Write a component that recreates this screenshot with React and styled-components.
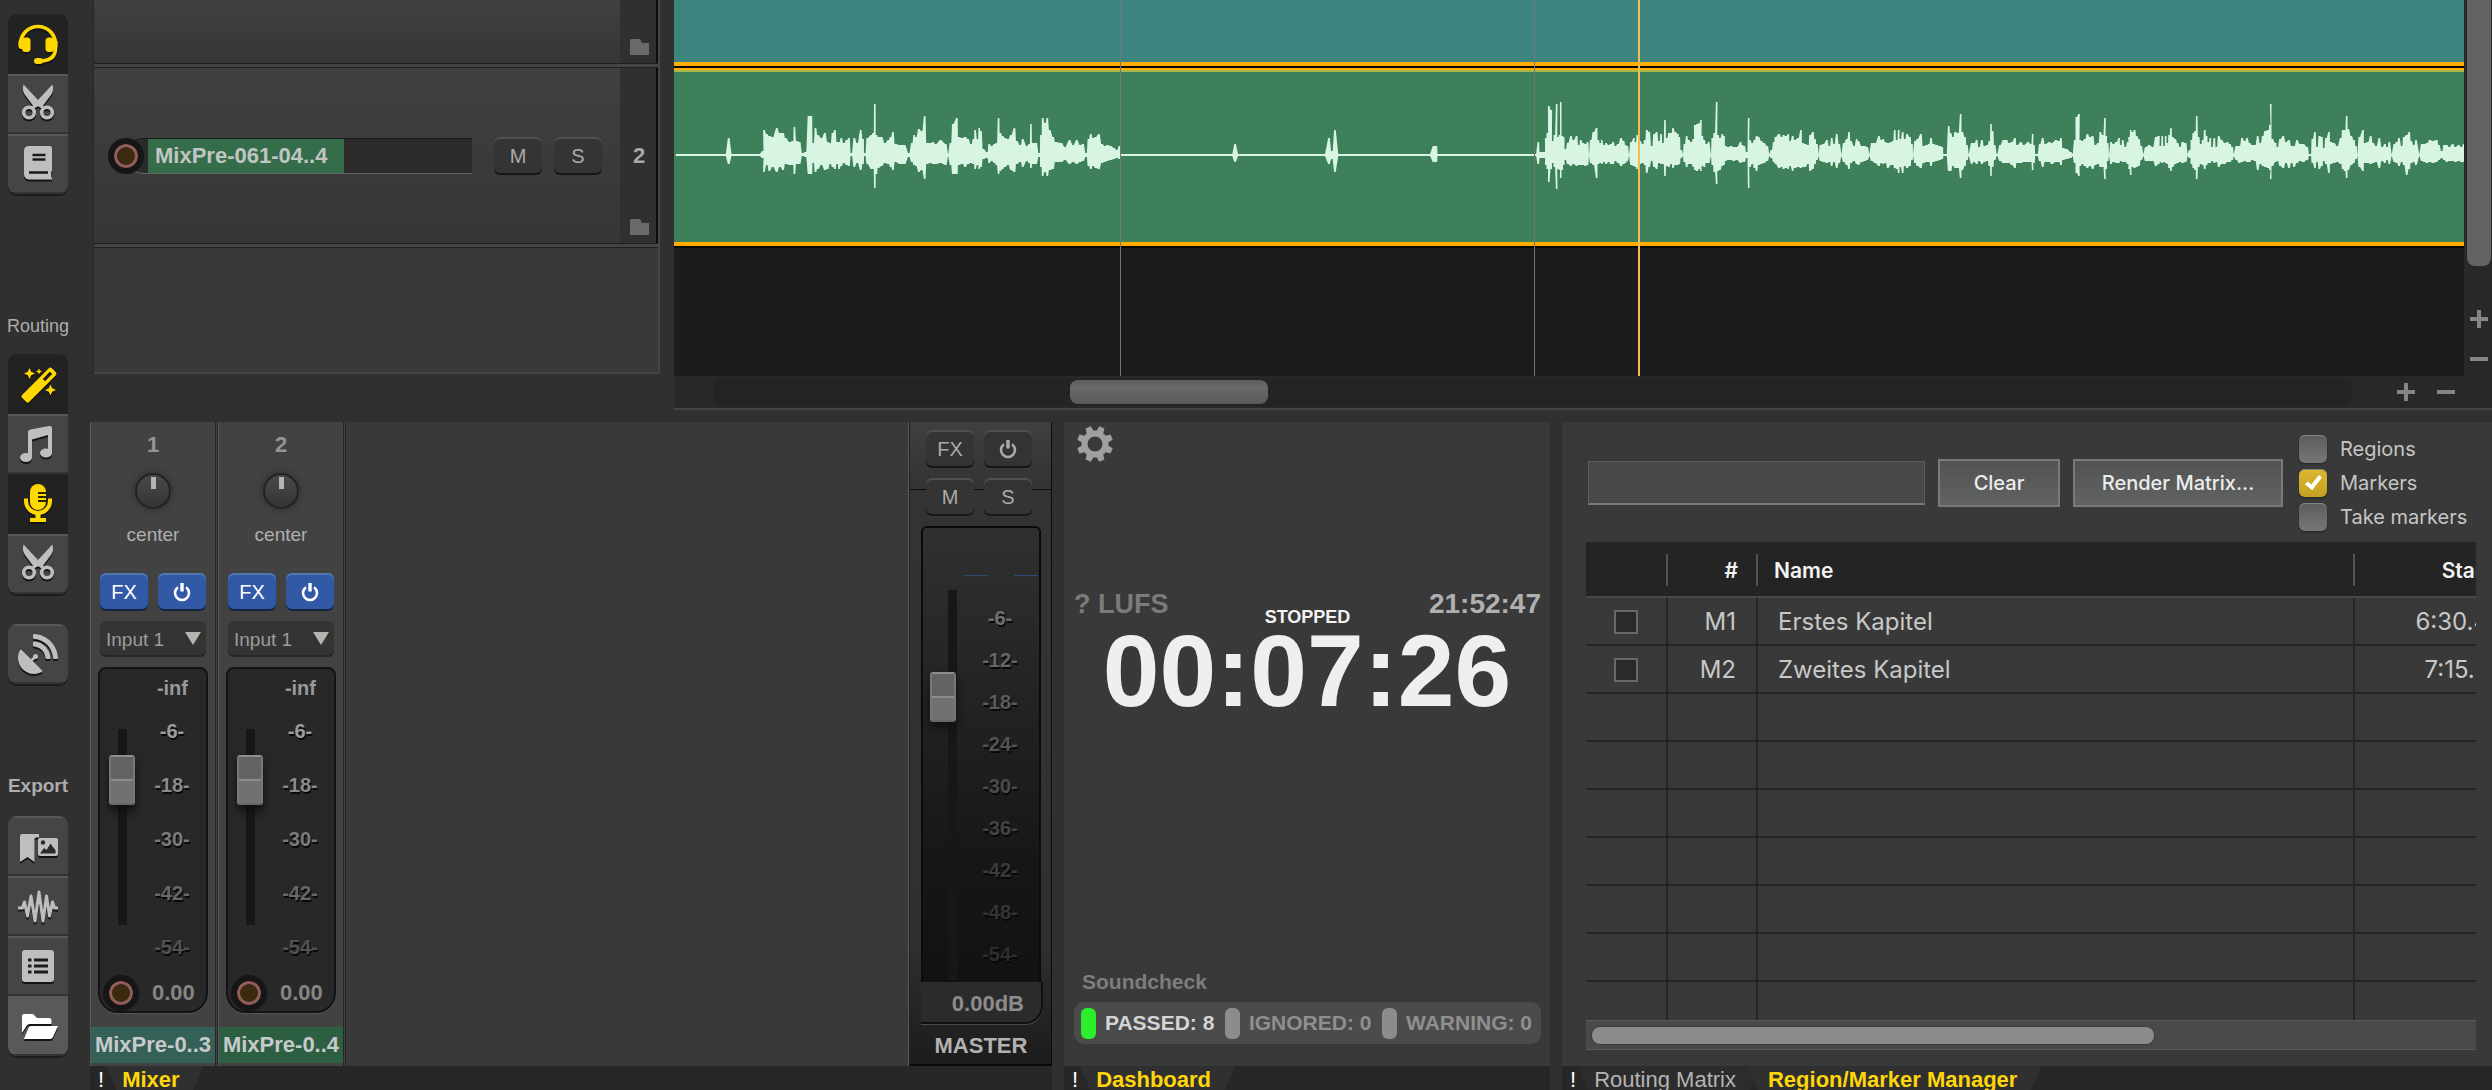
import React from "react";
import styled, { createGlobalStyle, css } from "styled-components";
import { FaSatelliteDish } from "react-icons/fa";

const sans = '"Liberation Sans", Arial, sans-serif';
const ui = 'Inter, "Liberation Sans", sans-serif';

const GlobalStyle = createGlobalStyle`
  *, *::before, *::after { box-sizing: border-box; }
  html, body { margin: 0; background: #303030; }
  body { font-family: ${sans}; color: #a9a9a9; overflow: hidden; }
  button, input, select { font: inherit; color: inherit; margin: 0; }
`;

/* ---------- frame ---------- */

const Frame = styled.div`
  display: grid;
  grid-template-columns: 90px minmax(0, 1fr);
  grid-template-rows: minmax(0, 1fr);
  height: 100vh;
  overflow: hidden;
  background: #303030;
`;

const Main = styled.main`
  display: flex;
  flex-direction: column;
  min-width: 0;
  min-height: 0;
`;

const Upper = styled.section`
  display: flex;
  flex: none;
  height: 410px;
`;

const Lower = styled.section`
  display: grid;
  grid-template-columns: 962px 486px minmax(0, 1fr);
  grid-template-rows: minmax(0, 1fr);
  gap: 12px;
  flex: 1;
  min-height: 0;
  padding-top: 12px;
`;

/* ---------- sidebar ---------- */

const Sidebar = styled.nav`
  display: flex;
  flex-direction: column;
  align-items: flex-start;
  padding: 14px 8px 0;
`;

const SideLabel = styled.h2`
  width: 60px;
  margin: ${(p) => (p.$bold ? "92px 0 20px" : "122px 0 18px")};
  display: flex;
  justify-content: center;
  font-size: ${(p) => (p.$bold ? "19px" : "18px")};
  font-weight: ${(p) => (p.$bold ? 700 : 400)};
  line-height: 20px;
  color: #adadad;
`;

const SideGroup = styled.div`
  width: 60px;
  border-radius: 9px;
  overflow: hidden;
  box-shadow: 0 2px 0 #1c1c1c;
  margin-top: ${(p) => (p.$apart ? "30px" : "0")};
`;

const SideButton = styled.button`
  display: block;
  width: 60px;
  height: 60px;
  padding: 0;
  border: 0;
  border-top: 2px solid ${(p) => (p.$on ? "#242424" : "#585858")};
  background: ${(p) => (p.$on ? "#222222" : p.$lit ? "#595959" : "#454545")};
  color: ${(p) => (p.$on ? "#ffd800" : p.$lit ? "#ffffff" : "#bdbfbf")};
  box-shadow: inset 0 -2px 0 ${(p) => (p.$on ? "#222222" : "#333333")};

  svg {
    display: block;
    width: 60px;
    height: 60px;
    margin-top: -2px;
    filter: drop-shadow(0 2px 0 #141414);
  }
  svg.dish {
    padding: 10px;
  }
`;

const Icon = ({ children }) => (
  <svg viewBox="0 0 60 60" fill="none" aria-hidden="true">{children}</svg>
);

const HeadsetIcon = () => (
  <Icon>
    <path d="M12.500 31.500v-1.500a17.500 17.500 0 0 1 35 0v4c0 8-5 12.500-14 13" stroke="currentColor" strokeWidth="3.600" />
    <path d="M10.500 27h6v8h-3a3 3 0 0 1-3-3zM49.500 27h-6v8h3a3 3 0 0 0 3-3z" fill="currentColor" />
    <rect x="14" y="23.500" width="8.500" height="14.500" rx="3.500" fill="currentColor" />
    <rect x="37.500" y="23.500" width="8.500" height="14.500" rx="3.500" fill="currentColor" />
    <rect x="26" y="44" width="9" height="6" rx="3" fill="currentColor" />
  </Icon>
);

const ScissorsIcon = () => (
  <Icon>
    <path d="M15.600 10.500c-1.400 4-.6 7.500 1.400 10.500l9.400 12.500 4-1.500 3.200 2.500 2.400-2z" fill="currentColor" />
    <path d="M44.400 10.500c1.400 4 .6 7.500-1.400 10.500l-9.400 12.500-4-1.500-3.200 2.500-2.400-2z" fill="currentColor" />
    <circle cx="21" cy="38.500" r="5.300" stroke="currentColor" strokeWidth="3.600" />
    <circle cx="39" cy="38.500" r="5.300" stroke="currentColor" strokeWidth="3.600" />
  </Icon>
);

const BookIcon = () => (
  <Icon>
    <path d="M20.500 12H42a2 2 0 0 1 2 2v22.500l-1 2V43l1 1v1.500H21a5 5 0 0 1-5-5V16.500a4.500 4.500 0 0 1 4.500-4.500z" fill="currentColor" />
    <path d="M24.500 21h13M24.500 25.500h13M21 38.500h19" stroke="#1b1b1b" strokeWidth="2.400" />
  </Icon>
);

const star = (x, y, r) =>
  `M${x} ${y - r}L${x + r * 0.3} ${y - r * 0.3}L${x + r} ${y}L${x + r * 0.3} ${y + r * 0.3}L${x} ${y + r}L${x - r * 0.3} ${y + r * 0.3}L${x - r} ${y}L${x - r * 0.3} ${y - r * 0.3}z`;

const WandIcon = () => (
  <Icon>
    <g transform="rotate(-45 31 31)">
      <path fillRule="evenodd" fill="currentColor" d="M12 26h37.500a2.500 2.500 0 0 1 2.500 2.500v5a2.500 2.500 0 0 1-2.500 2.500H12a2 2 0 0 1-2-2v-6a2 2 0 0 1 2-2zM38 29.400v3.200h10v-3.200z" />
    </g>
    <path d={star(21.5, 19.5, 5.5)} fill="currentColor" />
    <path d={star(31, 17.5, 3)} fill="currentColor" />
    <path d={star(42.5, 36, 5.5)} fill="currentColor" />
  </Icon>
);

const MusicIcon = () => (
  <Icon>
    <path d="M20 18.500c0-1.500 1-2.600 2.500-3L41 12c2-.4 3 .6 3 2v25h-4V21l-16 4.500V43.500h-4z" fill="currentColor" />
    <ellipse cx="18" cy="43.500" rx="6" ry="4.500" fill="currentColor" />
    <ellipse cx="38" cy="39" rx="6" ry="4.500" fill="currentColor" />
  </Icon>
);

const MicIcon = () => (
  <Icon>
    <rect x="22" y="10" width="16" height="26" rx="8" fill="currentColor" />
    <path d="M30 19h8M30 23h8M30 27h8" stroke="#2a2400" strokeWidth="1.800" />
    <path d="M18 24.500v2.500a12 12 0 0 0 24 0v-2.500" stroke="currentColor" strokeWidth="4" />
    <path d="M27.500 39h5v5h5.500v4H22v-4h5.500z" fill="currentColor" />
  </Icon>
);

const BookmarkImageIcon = () => (
  <Icon>
    <path d="M14 18h17v3.500h-3a2 2 0 0 0-1.500 2V46L19.500 41 12 46V20a2 2 0 0 1 2-2z" fill="currentColor" />
    <rect x="30" y="22" width="20" height="18" rx="2" fill="currentColor" />
    <circle cx="35" cy="26.500" r="2.200" fill="#2b2b2b" />
    <path d="M32 37.500l4-5.500 2.500 2 4-6.500 2 3 3 3.500v3.500z" fill="#2b2b2b" />
  </Icon>
);

const WaveIcon = () => (
  <Icon>
    <path d="M10 32h4.500l2-6 3 14 3.500-20 4 25 4-29 4 29 3.500-25 3 20 3-14 2 6H50" stroke="currentColor" strokeWidth="3" strokeLinejoin="round" />
  </Icon>
);

const ListIcon = () => (
  <Icon>
    <rect x="14" y="14" width="32" height="32" rx="3" fill="currentColor" />
    <path d="M20 24h3.500M26 24h14M20 30h3.500M26 30h14M20 36h3.500M26 36h14" stroke="#1b1b1b" strokeWidth="3.200" />
  </Icon>
);

const FolderIcon = () => (
  <Icon>
    <path d="M14 37V20a2 2 0 0 1 2-2h9l4 4h12a2.500 2.500 0 0 1 2.500 2.500V28H22a4 4 0 0 0-3.500 2z" fill="currentColor" />
    <path d="M23 30h27l-5 11a3 3 0 0 1-3 2H16l4.500-11a3 3 0 0 1 2.500-2z" fill="currentColor" />
  </Icon>
);

/* ---------- shared controls ---------- */

const PadButton = styled.button`
  display: flex;
  align-items: center;
  justify-content: center;
  flex: none;
  width: 48px;
  height: 38px;
  padding: 0;
  border: 0;
  border-radius: 6px;
  font-size: 20px;
  line-height: 24px;
  ${(p) =>
    p.$active
      ? css`
          background: #3159a6;
          color: #ffffff;
          box-shadow: inset 0 2px 0 #5078ac, inset 0 -2px 0 #16243f;
        `
      : css`
          background: #343434;
          color: #aaaaaa;
          box-shadow: inset 0 2px 0 #505050, inset 0 -2px 0 #171717;
        `}
`;

const PowerIcon = () => (
  <svg width="18" height="20" viewBox="0 0 18 20" fill="none" aria-hidden="true">
    <path d="M5 5.300a7 7 0 1 0 8 0" stroke="currentColor" strokeWidth="2.600" />
    <path d="M9 1v8.500" stroke="currentColor" strokeWidth="3.400" />
  </svg>
);

const RecordButton = styled.button`
  position: relative;
  flex: none;
  width: 36px;
  height: 36px;
  padding: 0;
  border: 6px solid #161616;
  border-radius: 50%;
  background: #3a2a10;
  box-shadow: inset 0 0 0 3px #905d5b;
`;

const Slider = styled.input`
  appearance: none;
  writing-mode: vertical-lr;
  direction: rtl;
  flex: none;
  width: 27px;
  height: ${(p) => p.$length};
  padding: 0;
  background: linear-gradient(#171717, #171717) ${(p) => (p.$edge ? "right" : "center")} / 9px 100% no-repeat;

  &::-webkit-slider-runnable-track {
    width: 27px;
    height: 100%;
  }
  &::-webkit-slider-thumb {
    appearance: none;
    width: 26px;
    height: 50px;
    border: 2px solid #787878;
    border-top-color: #8e8e8e;
    border-bottom-color: #686868;
    border-radius: 3px;
    background: linear-gradient(#636363 0 22px, #8c8c8c 22px 24px, #717171 24px);
    box-shadow: 0 6px 8px #111111;
  }
`;

const ScaleMark = styled.span`
  display: block;
  font-size: 20px;
  font-weight: 700;
  line-height: ${(p) => p.$pitch};
  color: ${(p) => p.$tone};
  text-shadow: 1px 2px 0 #080808;
`;

/* ---------- track panel ---------- */

const TrackPanel = styled.div`
  display: flex;
  flex-direction: column;
  flex: none;
  width: 566px;
  height: 374px;
  margin: 0 14px 0 4px;
  border-right: 2px solid #454545;
  border-bottom: 2px solid #454545;
  background: #393939;
  box-shadow: -1px 0 0 #262626;
`;

const TrackRow = styled.div`
  display: flex;
  height: ${(p) => p.$height};
  border-bottom: 1px solid #202020;
  background: linear-gradient(#404040, #363636);
`;

const TrackGap = styled.div`
  height: 4px;
  border-bottom: 1px solid #202020;
  background: #444444;
`;

const TrackMain = styled.div`
  display: flex;
  flex: 1;
  align-items: center;
  min-width: 0;
  padding: 0 18px 0 14px;
`;

const TrackIndex = styled.div`
  display: grid;
  grid-template-rows: 1fr 24px 1fr;
  justify-items: center;
  width: 38px;
  padding: 0 0 8px 2px;
  border-right: 2px solid #0c0c0c;
  background: #303030;
  font-size: 22px;
  font-weight: 700;
  line-height: 24px;

  svg {
    grid-row: 3;
    align-self: end;
  }
  b {
    grid-row: 2;
    margin-top: 4px;
  }
`;

const TrackField = styled.div`
  display: flex;
  flex: 1;
  height: 36px;
  margin: 0 22px 0 -18px;
  padding-left: 22px;
  border-top: 1px solid #1a1a1a;
  border-bottom: 1px solid #636363;
  border-radius: 18px 0 0 18px;
  background: #2b2b2b;
`;

const TrackName = styled.span`
  padding: 0 8px 0 7px;
  width: 196px;
  background: #356d4b;
  color: #c0c6c2;
  font-size: 22px;
  font-weight: 700;
  line-height: 34px;
  white-space: nowrap;
`;

const RowButtons = styled.div`
  display: flex;
  gap: ${(p) => p.$gap || "10px"};
`;

const SmallFolder = () => (
  <svg width="19" height="16" viewBox="0 0 19 16" aria-hidden="true">
    <path d="M1 0h9l2 4h7v12H0V1z" fill="#696969" />
  </svg>
);

/* ---------- arrange view ---------- */

const Arrange = styled.div`
  display: grid;
  grid-template-columns: minmax(0, 1fr) 28px;
  grid-template-rows: minmax(0, 1fr) 32px;
  flex: 1;
  min-width: 0;
  border-bottom: 2px solid #444444;
  background: #282828;
`;

const Lanes = styled.div`
  position: relative;
  background: #1c1c1c;
  overflow: hidden;
`;

const Clip = styled.div`
  height: ${(p) => p.$height};
  background: ${(p) => p.$color};
  border-bottom: 4px solid #ffab00;
  border-top: ${(p) => (p.$first ? "0" : "2px solid #ffab00")};
  box-shadow: 0 2px 0 #080808${(p) => (p.$first ? "" : ", inset 0 2px 0 #a7b846")};
  margin-bottom: 2px;

  svg {
    display: block;
    width: 100%;
    height: 172px;
  }
`;

const TimeLine = styled.i`
  position: absolute;
  top: 0;
  bottom: 0;
  left: ${(p) => p.$at};
  width: ${(p) => (p.$cursor ? "2px" : "1px")};
  background: ${(p) => (p.$cursor ? "#f6bb5a" : "#74767a")};
`;

const HScroll = styled.div`
  display: flex;
  align-items: center;
  padding: 0 8px 0 40px;
`;

const HTrack = styled.div`
  flex: 1;
  height: 28px;
  margin-right: 44px;
  padding: 2px 0 2px 356px;
  border-radius: 8px;
  background: #242424;
`;

const HThumb = styled.div`
  width: 198px;
  height: 24px;
  border-radius: 8px;
  background: linear-gradient(#5c5c5c, #6a6a6a 30%, #5a5a5a);
`;

const VScroll = styled.div`
  display: flex;
  flex-direction: column;
  align-items: center;
  grid-row: 1 / 3;
  grid-column: 2;
  gap: 20px;
  padding: 0 1px 0 3px;
`;

const VThumb = styled.div`
  width: 24px;
  height: 266px;
  margin-bottom: 23px;
  border-radius: 0 0 8px 8px;
  background: #636363;
`;

const ZoomButton = styled.button`
  display: flex;
  align-items: center;
  justify-content: center;
  width: 20px;
  height: 20px;
  padding: 0;
  border: 0;
  background: none;
  margin-left: ${(p) => (p.$spaced ? "20px" : "0")};
`;

const Plus = () => (
  <svg width="18" height="18" viewBox="0 0 18 18" stroke="#858585" strokeWidth="4" aria-hidden="true">
    <path d="M0 9h18M9 0v18" />
  </svg>
);
const Minus = () => (
  <svg width="18" height="18" viewBox="0 0 18 18" stroke="#858585" strokeWidth="4" aria-hidden="true">
    <path d="M0 9h18" />
  </svg>
);

/* Each entry is position:peak-above/peak-below; each segment has its own origin and resolution. */
const SEGMENTS = [
  {
    from: -14,
    step: 1.704,
    peaks:
      "27:1/1 112:1/1 117:17/9 122:1/1 170:1/1 175:4/3 177:25/17 182:21/10 186:19/16 192:18/12 199:27/17 204:22/12 210:22/15 214:17/9 221:13/10 226:14/10 229:28/19 233:14/9 238:13/9 243:2/1 248:3/2 253:39/19 258:39/19 261:12/8 265:27/17 269:20/14 275:17/10 281:22/15 286:13/14 290:12/9 294:22/12 298:25/14 302:13/9 305:13/14 309:17/11 313:12/8 318:15/10 322:17/11 326:2/1 331:17/12 336:12/8 342:25/15 346:16/9 349:2/1 353:17/9 360:20/14 363:22/14 366:51/33 369:20/19 372:18/13 378:18/11 383:12/8 389:15/9 393:18/12 397:23/15 401:11/7 409:10/9 417:10/9 424:2/2 429:12/7 433:20/10 436:18/11 441:26/17 446:24/15 451:39/24 455:12/9 461:12/8 465:13/9 470:11/9 478:15/8 487:11/10 491:1/1 495:12/10 499:31/19 506:37/19 509:18/10 515:17/9 520:18/12 525:16/9 530:11/8 534:16/9 537:25/14 541:16/10 544:27/14 547:24/12 551:6/4 557:3/3 561:11/8 565:9/6 570:11/8 573:12/10 577:37/19 580:22/16 584:19/14 588:17/12 593:16/10 598:20/15 604:27/17 608:14/9 614:10/7 618:16/12 625:9/6 629:11/8 632:31/13 635:12/9 641:12/9 646:2/2 649:20/12 652:37/21 656:32/17 660:37/21 664:25/15 670:18/14 674:13/7 684:12/7 690:8/5 698:15/9 704:10/7 710:15/9 716:10/7 721:11/6 726:2/2 730:16/11 734:21/14 738:17/11 742:18/13 748:21/14 753:11/8 758:9/7 762:10/6 768:9/5 774:7/4 778:5/3 783:9/4 785:1/1 975:1/1 980:11/7 985:1/1 1133:1/1 1140:17/9 1145:4/4 1150:25/17 1156:1/1 1312:1/1 1318:9/7 1323:9/7 1325:1/1",
  },
  {
    from: 856,
    step: 3,
    peaks:
      "18:1/1 25:13/9 31:3/3 43:3/3 47:17/10 52:22/14 56:49/27 64:45/14 68:14/8 73:20/12 80:51/34 84:18/14 88:20/15 92:53/23 97:19/15 101:18/10 106:6/5 113:12/9 123:19/11 130:15/9 140:19/11 146:10/10 152:15/10 160:12/10 166:11/11 173:13/10 177:1/1 182:15/8 190:23/10 200:27/23 205:15/9 211:12/8 215:15/9 222:10/7 228:12/9 236:10/7 242:11/9 250:13/9 256:9/6 264:11/8 273:17/11 281:14/9 287:10/8 292:9/6 297:1/1 303:13/10 312:17/11 316:13/12 322:20/14 330:14/9 338:11/8 344:15/10 350:25/18 358:23/12 365:9/6 372:21/12 380:23/14 387:14/8 393:21/9 399:12/9 405:35/21 410:17/11 417:22/12 423:22/9 429:27/13 436:23/10 444:21/10 448:18/9 454:5/3 459:1/1 463:11/7 470:19/12 476:15/9 484:13/9 490:16/12 494:30/15 502:31/16 508:32/14 513:35/16 517:19/11 523:15/12 529:11/8 536:13/8 543:1/1 547:17/10 553:22/17 560:53/29 564:20/16 570:17/15 577:21/11 582:19/10 587:9/6 594:8/5 602:9/5 612:8/6 620:8/5 632:13/8 637:10/7 643:9/7 650:3/3 656:37/33 660:15/12 667:12/9 673:15/13 680:19/16 686:18/10 694:14/9 702:12/8 712:9/6 718:1/1 724:5/3 731:13/7 736:18/9 747:21/13 755:18/12 760:20/14 768:19/13 775:21/14 780:14/11 788:19/16 794:15/13 804:17/12 813:25/13 818:12/12 826:11/12 834:10/9 840:20/16 849:23/14 855:16/9 861:11/5 866:1/1 871:10/6 880:11/7 891:15/8 898:9/7 905:17/11 912:11/7 920:21/13 928:11/8 934:1/1 941:12/7 950:16/10 957:23/14 963:14/8 972:9/6 980:16/9 985:14/10 995:9/7 1005:9/6 1012:8/5 1018:1/1 1025:12/6 1035:12/8 1047:19/11 1054:15/8 1060:16/9 1066:13/8 1073:12/13 1084:13/10 1088:14/10 1094:25/13 1100:15/14 1106:25/18 1111:16/12 1118:23/18 1124:16/11 1131:21/13 1140:18/11 1146:11/5 1149:1/1 1155:14/8 1162:16/11 1173:21/13 1180:9/8 1190:10/7 1196:11/7 1203:17/11 1210:11/7 1220:10/6 1230:9/5 1237:8/4 1240:1/1 1250:1/1 1256:29/16 1262:22/16 1269:18/11 1275:23/13 1284:22/13 1292:41/23 1297:23/15 1305:18/11 1311:10/5 1316:1/1 1325:12/9 1332:12/7 1340:15/9 1347:8/6 1356:15/9 1363:9/7 1372:10/6 1378:14/11 1383:31/21 1388:24/12 1394:10/5 1400:1/1",
  },
  {
    from: 1316,
    step: 3,
    peaks:
      "22:1/1 30:10/6 40:15/8 50:15/8 57:12/8 65:13/10 75:17/13 81:10/8 93:13/8 101:10/7 115:13/7 122:11/7 128:21/15 132:10/8 136:1/1 143:1/1 149:11/6 158:17/12 166:11/7 178:13/7 185:12/9 198:15/7 206:14/7 213:17/10 219:7/5 230:6/4 242:3/3 248:1/1 254:15/8 259:38/18 267:41/21 271:15/11 277:14/9 284:16/11 292:21/13 300:18/11 308:19/14 316:10/10 324:12/9 331:23/12 338:20/12 345:37/24 349:19/14 353:12/6 357:1/1 363:13/9 370:11/7 379:13/8 387:17/8 392:10/6 398:15/7 406:8/7 413:13/9 417:18/14 422:25/20 427:23/12 434:25/13 440:19/12 447:16/11 454:9/5 460:1/1 467:8/6 477:10/6 488:8/6 497:18/11 507:19/9 511:9/7 517:19/8 522:9/7 527:19/8 532:12/9 537:20/13 543:27/16 548:18/12 556:16/9 563:12/8 570:8/7 577:13/8 587:12/7 593:1/1 599:5/3 604:15/9 610:22/13 615:24/15 620:39/24 626:18/12 632:11/9 638:15/10 644:25/14 650:19/10 655:13/8 661:17/8 666:8/6 673:17/8 679:8/7 686:19/12 695:15/9 704:12/9 712:13/7 720:11/7 727:8/5 731:1/1 739:9/5 748:9/8 756:17/7 764:14/6 771:17/7 779:12/7 786:10/5 795:10/6 803:19/15 811:12/9 818:19/11 825:24/12 835:25/13 839:30/15 842:51/24 847:16/11 857:12/7 862:8/6 870:16/11 880:19/13 888:13/8 897:15/13 905:9/8 912:9/12 921:15/8 930:11/6 940:11/7 952:8/5 957:1/1 963:1/1 967:16/8 975:23/13 981:8/7 988:19/14 996:18/11 1001:7/6 1008:17/9 1017:23/18 1022:13/9 1032:12/8 1042:9/7 1052:17/9 1058:25/14 1064:25/16 1070:39/23 1075:26/15 1084:19/10 1092:15/8 1098:9/4 1102:1/1 1108:18/12 1119:25/16 1124:12/8 1133:13/8 1142:19/9 1150:12/8 1158:9/7 1168:17/13 1176:8/6 1185:11/8 1191:8/5 1198:13/9 1205:1/1 1213:11/7 1220:13/8 1227:17/11 1235:9/7 1241:18/10 1250:20/20 1258:23/14 1264:14/8 1271:10/7 1278:15/10 1288:1/1 1295:11/6 1303:11/7 1311:12/8 1319:15/7 1329:14/8 1340:15/7 1347:10/5 1355:4/3 1362:10/5 1370:10/7 1378:8/6 1388:11/6 1396:8/7 1406:10/6 1414:8/7 1422:11/7",
  },
];

/* Peaks hold their level for about a pixel on each side; silent points stay sharp. */
const waveformPath = (mid) => {
  const points = SEGMENTS.flatMap(({ from, step, peaks }) =>
    peaks.split(" ").flatMap((entry) => {
      const [at, rest] = entry.split(":");
      const [up, down] = rest.split("/").map(Number);
      const x = from + at / step;
      const hold = up > 1 ? 0.8 : 0.1;
      return [
        [(x - hold).toFixed(1), mid - up, mid + down],
        [(x + hold).toFixed(1), mid - up, mid + down],
      ];
    })
  );
  const top = points.map(([x, y]) => `${x} ${y}`);
  const bottom = points.map(([x, , y]) => `${x} ${y}`).reverse();
  return `M${top.concat(bottom).join("L")}z`;
};

const ArrangeView = () => (
  <Arrange>
    <Lanes>
      <Clip $first $height="66px" $color="#3f857f" />
      <Clip $height="178px" $color="#3d805a">
        <svg viewBox="0 0 1790 172" preserveAspectRatio="none" aria-label="Waveform">
          <path d={waveformPath(85)} fill="#d8f5e4" />
        </svg>
      </Clip>
      <TimeLine $at="446px" />
      <TimeLine $at="860px" />
      <TimeLine $at="964px" $cursor />
    </Lanes>
    <VScroll>
      <VThumb />
      <ZoomButton aria-label="Zoom in vertically"><Plus /></ZoomButton>
      <ZoomButton aria-label="Zoom out vertically"><Minus /></ZoomButton>
    </VScroll>
    <HScroll>
      <HTrack><HThumb /></HTrack>
      <ZoomButton aria-label="Zoom in"><Plus /></ZoomButton>
      <ZoomButton $spaced aria-label="Zoom out"><Minus /></ZoomButton>
    </HScroll>
  </Arrange>
);

/* ---------- docked panels ---------- */

const Dock = styled.section`
  display: flex;
  flex-direction: column;
  min-width: 0;
  min-height: 0;
`;

const DockBody = styled.div`
  display: flex;
  flex-direction: ${(p) => (p.$row ? "row" : "column")};
  flex: 1;
  min-height: 0;
  background: #393939;
`;

const TabBar = styled.div`
  display: flex;
  flex: none;
  height: 24px;
  padding-left: 8px;
  background: #272727;
  overflow: hidden;
  font-size: 22px;
  line-height: 28px;
  color: #ffffff;
`;

const Tab = styled.button`
  height: 28px;
  margin-left: ${(p) => (p.$next ? "-12px" : "2px")};
  padding: 0 24px 0 ${(p) => (p.$next ? "20px" : "16px")};
  border: 0;
  background: ${(p) => (p.$active ? "#303030" : "#2c2c2c")};
  clip-path: polygon(0 0, 100% 0, calc(100% - 12px) 100%, 12px 100%);
  color: ${(p) => (p.$active ? "#ffd60a" : "#b4b4b4")};
  font-weight: ${(p) => (p.$active ? 700 : 400)};
  line-height: 28px;
  white-space: nowrap;
`;

const Tabs = ({ names, active }) => (
  <TabBar role="tablist">
    !
    {names.map((name, i) => (
      <Tab key={name} role="tab" aria-selected={name === active} $active={name === active} $next={i > 0}>
        {name}
      </Tab>
    ))}
  </TabBar>
);

/* ---------- mixer ---------- */

const Strip = styled.div`
  display: flex;
  flex-direction: column;
  align-items: center;
  flex: none;
  width: 128px;
  padding-top: 11px;
  border-left: 1px solid #5a5a5a;
  border-right: 3px double #262626;
  background: #424242;
`;

const StripNumber = styled.span`
  font-size: 22px;
  font-weight: 700;
  line-height: 24px;
  color: #959595;
`;

const Knob = styled.div`
  display: flex;
  justify-content: center;
  width: 36px;
  height: 36px;
  margin-top: 16px;
  padding-top: 2px;
  border: 2px solid #232323;
  border-radius: 50%;
  background: linear-gradient(#4a4a4a, #343434);
  box-shadow: 0 0 5px 2px #353535;

  i {
    width: 5px;
    height: 12px;
    background: #b4b4b4;
  }
`;

const PanLabel = styled.span`
  margin: 14px 0 26px;
  font-size: 19px;
  line-height: 24px;
  color: #b0b0b0;
`;

const SelectBox = styled.label`
  position: relative;
  width: 106px;
  margin: 10px 0;

  select {
    appearance: none;
    display: block;
    width: 100%;
    height: 36px;
    padding: 0 6px;
    border: 0;
    border-radius: 6px;
    background: #343434;
    box-shadow: inset 0 -2px 0 #262626;
    color: #9c9c9c;
    font-size: 19px;
  }
  svg {
    position: absolute;
    right: 5px;
    top: 11px;
    pointer-events: none;
  }
`;

const FaderBox = styled.div`
  width: 110px;
  border: 2px solid #131313;
  border-radius: 8px 8px 20px 20px;
  background: #282828;
  box-shadow: 0 1px 0 #555555;
`;

const Peak = styled.div`
  padding: 7px 18px 4px 0;
  font-size: 20px;
  font-weight: 700;
  line-height: 24px;
  text-align: right;
  color: #999999;
`;

const FaderArea = styled.div`
  display: flex;
  padding: ${(p) => (p.$master ? "0 0 0 7px" : "0 4px 0 9px")};

  > input {
    margin-top: ${(p) => (p.$master ? "62px" : "25px")};
  }
  > div {
    flex: 1;
    padding-top: ${(p) => (p.$master ? "69px" : "0")};
    margin-left: ${(p) => (p.$master ? "4px" : "6px")};
    text-align: center;
  }
`;

const FaderFoot = styled.div`
  display: flex;
  align-items: center;
  gap: 13px;
  height: 37px;
  padding-left: 3px;
  font-size: 22px;
  font-weight: 700;
  color: #858585;
`;

const StripName = styled.div`
  align-self: stretch;
  margin-top: 14px;
  background: ${(p) => p.$color};
  color: #c6caca;
  font-size: 22px;
  font-weight: 700;
  line-height: 36px;
  text-align: center;
  white-space: nowrap;
`;

const MARKS = [
  ["-6-", "#9c9c9c"],
  ["-18-", "#8a8a8a"],
  ["-30-", "#797979"],
  ["-42-", "#676767"],
  ["-54-", "#525252"],
];

const ChannelStrip = ({ number, name, color }) => (
  <Strip>
    <StripNumber>{number}</StripNumber>
    <Knob><i /></Knob>
    <PanLabel>center</PanLabel>
    <RowButtons>
      <PadButton $active>FX</PadButton>
      <PadButton $active aria-label="FX power"><PowerIcon /></PadButton>
    </RowButtons>
    <SelectBox>
      <select aria-label={`Input of track ${number}`} defaultValue="Input 1">
        <option>Input 1</option>
      </select>
      <svg width="16" height="13" aria-hidden="true"><path d="M0 0h16L8 13z" fill="#b4b4ae" /></svg>
    </SelectBox>
    <FaderBox>
      <Peak>-inf</Peak>
      <FaderArea>
        <Slider type="range" min="0" max="1000" defaultValue="822" $length="196px" aria-label={`Volume of track ${number}`} />
        <div>
          {MARKS.map(([text, tone]) => (
            <ScaleMark key={text} $pitch="54px" $tone={tone}>{text}</ScaleMark>
          ))}
        </div>
      </FaderArea>
      <FaderFoot>
        <RecordButton aria-label={`Arm track ${number}`} />
        0.00
      </FaderFoot>
    </FaderBox>
    <StripName $color={color}>{name}</StripName>
  </Strip>
);

const MixerSpace = styled.div`
  flex: 1;
  border-right: 1px solid #5a5a5a;
`;

const Master = styled.div`
  display: flex;
  flex-direction: column;
  width: 143px;
  padding: 8px 10px 0 11px;
  border-right: 1px solid #0c0c0c;
  border-bottom: 2px solid #0a0a0a;
  border-left: 1px solid #202020;
  background:
    linear-gradient(#0c0c0c, #0c0c0c) 0 67px / 100% 1px no-repeat,
    linear-gradient(#3f3f3f, #333333 68px, #303030 80%, #1c1c1c);

  > ${RowButtons} {
    margin: 0 0 10px 5px;
  }
`;

const MasterBox = styled.div`
  width: 120px;
  height: 456px;
  border: 2px solid #0b0b0b;
  border-bottom: 0;
  border-radius: 6px 6px 0 0;
  background:
    linear-gradient(#2b4a78, #2b4a78) 41px 47px / 24px 1px no-repeat,
    linear-gradient(#2b4a78, #2b4a78) 91px 47px / 24px 1px no-repeat,
    linear-gradient(#303030, #161616 75%, #121212);
`;

const MasterReadout = styled.div`
  width: 122px;
  height: 42px;
  padding-right: 17px;
  border-right: 2px solid #101010;
  border-bottom: 2px solid #101010;
  border-radius: 0 0 18px 0;
  background: #2b2b2b;
  box-shadow: 0 1px 0 #4a4a4a;
  color: #8c8c8c;
  font-size: 22px;
  font-weight: 700;
  line-height: 44px;
  text-align: right;
`;

const MasterName = styled.div`
  margin-top: 10px;
  color: #b2b2b2;
  font-size: 22px;
  font-weight: 700;
  line-height: 24px;
  text-align: center;
`;

const MASTER_MARKS = [
  ["-6-", "#717171"],
  ["-12-", "#656565"],
  ["-18-", "#5c5c5c"],
  ["-24-", "#535353"],
  ["-30-", "#4b4b4b"],
  ["-36-", "#434343"],
  ["-42-", "#3b3b3b"],
  ["-48-", "#353535"],
  ["-54-", "#2e2e2e"],
];

const Mixer = () => (
  <Dock>
    <DockBody $row>
      <ChannelStrip number="1" name="MixPre-0..3" color="#356057" />
      <ChannelStrip number="2" name="MixPre-0..4" color="#2d5f42" />
      <MixerSpace />
      <Master>
        <RowButtons>
          <PadButton>FX</PadButton>
          <PadButton aria-label="Master FX power"><PowerIcon /></PadButton>
        </RowButtons>
        <RowButtons>
          <PadButton>M</PadButton>
          <PadButton>S</PadButton>
        </RowButtons>
        <MasterBox>
          <FaderArea $master>
            <Slider type="range" min="0" max="1000" defaultValue="759" $length="390px" $edge aria-label="Master volume" />
            <div>
              {MASTER_MARKS.map(([text, tone]) => (
                <ScaleMark key={text} $pitch="42px" $tone={tone}>{text}</ScaleMark>
              ))}
            </div>
          </FaderArea>
        </MasterBox>
        <MasterReadout>0.00dB</MasterReadout>
        <MasterName>MASTER</MasterName>
      </Master>
    </DockBody>
    <Tabs names={["Mixer"]} active="Mixer" />
  </Dock>
);

/* ---------- dashboard ---------- */

const GearButton = styled.button`
  align-self: flex-start;
  width: 36px;
  height: 36px;
  margin: 4px 0 0 13px;
  padding: 0;
  border: 0;
  background: none;

  svg {
    display: block;
  }
`;

const StatusRow = styled.div`
  display: grid;
  grid-template-columns: 1fr auto 1fr;
  height: 40px;
  margin-top: 126px;
  padding: 0 9px 0 10px;
  font-weight: 700;
  font-size: 28px;
  line-height: 32px;
`;

const Loudness = styled.span`
  font-size: 27px;
  color: #7b7b7b;
`;

const PlayState = styled.span`
  align-self: end;
  padding-bottom: 3px;
  font-size: 18px;
  line-height: 16px;
  color: #f2f2f2;
`;

const WallClock = styled.time`
  text-align: right;
  color: #b0b0b0;
`;

const Position = styled.time`
  margin-top: 3px;
  font-size: 102px;
  font-weight: 700;
  line-height: 80px;
  text-align: center;
  color: #efefef;
`;

const CheckTitle = styled.h3`
  margin: auto 0 8px 18px;
  font-size: 21px;
  font-weight: 700;
  line-height: 24px;
  color: #7d7d7d;
`;

const CheckBar = styled.div`
  display: flex;
  align-items: center;
  justify-content: space-between;
  height: 42px;
  margin: 0 9px 22px 10px;
  padding: 0 9px 0 7px;
  border-radius: 10px;
  background: #4b4b4b;
`;

const CheckItem = styled.span`
  display: flex;
  align-items: center;
  gap: 9px;
  font-size: 21px;
  font-weight: 700;
  line-height: 24px;
  white-space: nowrap;
  color: ${(p) => (p.$on ? "#d2d6d4" : "#8f8f8f")};

  &::before {
    content: "";
    width: 15px;
    height: 31px;
    border-radius: 6px;
    background: ${(p) => (p.$on ? "#2cee2c" : "#8c8c8c")};
  }
`;

const Dashboard = () => (
  <Dock>
    <DockBody>
      <GearButton aria-label="Dashboard settings">
        <svg width="36" height="36" viewBox="-18 -18 36 36" aria-hidden="true">
          <circle r="10.500" fill="none" stroke="#a0a0a0" strokeWidth="6" />
          {[0, 1, 2, 3, 4, 5, 6, 7].map((n) => (
            <path key={n} d="M-3.700-12L-2.800-18H2.800L3.700-12z" fill="#a0a0a0" transform={`rotate(${n * 45 + 22.5})`} />
          ))}
        </svg>
      </GearButton>
      <StatusRow>
        <Loudness>? LUFS</Loudness>
        <PlayState>STOPPED</PlayState>
        <WallClock>21:52:47</WallClock>
      </StatusRow>
      <Position>00:07:26</Position>
      <CheckTitle>Soundcheck</CheckTitle>
      <CheckBar>
        <CheckItem $on>PASSED: 8</CheckItem>
        <CheckItem>IGNORED: 0</CheckItem>
        <CheckItem>WARNING: 0</CheckItem>
      </CheckBar>
    </DockBody>
    <Tabs names={["Dashboard"]} active="Dashboard" />
  </Dock>
);

/* ---------- region / marker manager ---------- */

const Manager = styled.div`
  display: flex;
  flex-direction: column;
  flex: 1;
  min-height: 0;
  padding: 0 16px 16px 24px;
  font-family: ${ui};
`;

const Toolbar = styled.form`
  display: flex;
  align-items: center;
  flex: none;
  gap: 13px;
  height: 120px;
  padding: 2px 0 0 2px;
`;

const FilterInput = styled.input`
  flex: 1;
  min-width: 0;
  height: 44px;
  padding: 0 8px;
  border: 1px solid #5c5c5c;
  border-bottom: 2px solid #7a7a7a;
  background: #484848;
  font-size: 20px;
`;

const PushButton = styled.button`
  width: ${(p) => p.$width};
  height: 48px;
  padding: 0;
  border: 2px solid #7a7a7a;
  background: linear-gradient(#525252, #616463);
  color: #ececec;
  font-size: 20px;
  font-weight: 500;
`;

const Options = styled.div`
  display: flex;
  flex-direction: column;
  gap: 6px;
  width: 180px;
  padding-left: 3px;
`;

const Option = styled.label`
  display: flex;
  align-items: center;
  gap: 13px;
  font-size: 20px;
  line-height: 28px;
  white-space: nowrap;
  color: #c6c6c6;

  input {
    appearance: none;
    position: relative;
    width: 28px;
    height: 28px;
    border-radius: 6px;
    background: linear-gradient(#5c5c5c, #757777);
    box-shadow: inset 0 1px 0 #858585, 0 1px 2px #222222;
  }
  input:checked {
    background: linear-gradient(#dcb92e, #c4a022);
  }
  input:checked::after {
    content: "";
    position: absolute;
    left: 10px;
    top: 4px;
    width: 9px;
    height: 16px;
    border: solid #ffffff;
    border-width: 0 4px 4px 0;
    transform: rotate(38deg);
  }
`;

const TableFrame = styled.div`
  flex: 1;
  min-height: 0;
  overflow: hidden;
`;

const Table = styled.table`
  width: calc(100% + 24px);
  table-layout: fixed;
  border-collapse: separate;
  border-spacing: 0;

  th {
    height: 56px;
    padding: 2px 12px 0 16px;
    border-bottom: 2px solid #484848;
    background: #242424 linear-gradient(#555555, #555555) right 12px / 2px 32px no-repeat;
    color: #f4f4f4;
    font-size: 21px;
    font-weight: 600;
    text-align: left;
  }
  td {
    height: 48px;
    padding: 2px 12px 0 20px;
    border-bottom: 2px solid #252525;
    border-right: 2px solid #252525;
    color: #c8c8c8;
    font-size: 24px;
    line-height: 28px;
    white-space: nowrap;
  }
  th:nth-child(2), td:nth-child(2) {
    padding: 2px 20px 0 0;
    text-align: right;
  }
  th:nth-child(4), td:nth-child(4) {
    padding: 2px 9px 0 0;
    text-align: right;
  }
  td:first-child {
    padding: 2px 0 0 28px;
  }
  td input {
    appearance: none;
    display: block;
    width: 24px;
    height: 24px;
    border: 2px solid #686868;
    background: #2a2a2a;
  }
`;

const TableScroll = styled.div`
  display: flex;
  align-items: center;
  flex: none;
  height: 30px;
  padding: 0 6px;
  border-top: 1px solid #5a5a5a;
  border-bottom: 1px solid #5a5a5a;
  background: #494949;

  i {
    width: 64%;
    height: 17px;
    border-radius: 8px;
    background: #8b8b8b;
    box-shadow: 0 0 0 1px #3c3c3c;
  }
`;

const MARKERS = [
  { id: "M1", name: "Erstes Kapitel", start: "6:30.4" },
  { id: "M2", name: "Zweites Kapitel", start: "7:15.5" },
];
const EMPTY_ROWS = [3, 4, 5, 6, 7, 8, 9];

const MarkerManager = () => (
  <Dock>
    <DockBody>
      <Manager>
        <Toolbar>
          <FilterInput type="text" aria-label="Filter" />
          <PushButton type="button" $width="122px">Clear</PushButton>
          <PushButton type="button" $width="210px">Render Matrix...</PushButton>
          <Options>
            <Option><input type="checkbox" />Regions</Option>
            <Option><input type="checkbox" defaultChecked />Markers</Option>
            <Option><input type="checkbox" />Take markers</Option>
          </Options>
        </Toolbar>
        <TableFrame>
          <Table>
            <colgroup>
              <col width="82" />
              <col width="90" />
              <col />
              <col width="145" />
            </colgroup>
            <thead>
              <tr><th /><th>#</th><th>Name</th><th>Start</th></tr>
            </thead>
            <tbody>
              {MARKERS.map((m) => (
                <tr key={m.id}>
                  <td><input type="checkbox" aria-label={`Render ${m.name}`} /></td>
                  <td>{m.id}</td>
                  <td>{m.name}</td>
                  <td>{m.start}</td>
                </tr>
              ))}
              {EMPTY_ROWS.map((n) => (
                <tr key={n}><td /><td /><td /><td /></tr>
              ))}
            </tbody>
          </Table>
        </TableFrame>
        <TableScroll><i /></TableScroll>
      </Manager>
    </DockBody>
    <Tabs names={["Routing Matrix", "Region/Marker Manager"]} active="Region/Marker Manager" />
  </Dock>
);

/* ---------- app ---------- */

export default function App() {
  return (
    <>
      <GlobalStyle />
      <Frame>
        <Sidebar>
          <SideGroup>
            <SideButton $on aria-label="Recording view"><HeadsetIcon /></SideButton>
            <SideButton aria-label="Editing view"><ScissorsIcon /></SideButton>
            <SideButton aria-label="Storyboard view"><BookIcon /></SideButton>
          </SideGroup>
          <SideLabel>Routing</SideLabel>
          <SideGroup>
            <SideButton $on aria-label="Automatic routing"><WandIcon /></SideButton>
            <SideButton aria-label="Soundboard"><MusicIcon /></SideButton>
            <SideButton $on aria-label="Record routing"><MicIcon /></SideButton>
            <SideButton aria-label="Edit routing"><ScissorsIcon /></SideButton>
          </SideGroup>
          <SideGroup $apart>
            <SideButton aria-label="Remote call"><FaSatelliteDish className="dish" /></SideButton>
          </SideGroup>
          <SideLabel $bold>Export</SideLabel>
          <SideGroup>
            <SideButton aria-label="Chapter images"><BookmarkImageIcon /></SideButton>
            <SideButton aria-label="Render audio"><WaveIcon /></SideButton>
            <SideButton aria-label="Export checklist"><ListIcon /></SideButton>
            <SideButton $lit aria-label="Open project folder"><FolderIcon /></SideButton>
          </SideGroup>
        </Sidebar>
        <Main>
          <Upper>
            <TrackPanel>
              <TrackRow $height="64px">
                <TrackMain />
                <TrackIndex><SmallFolder /></TrackIndex>
              </TrackRow>
              <TrackGap />
              <TrackRow $height="176px">
                <TrackMain>
                  <RecordButton aria-label="Arm track" />
                  <TrackField><TrackName>MixPre-061-04..4</TrackName></TrackField>
                  <RowButtons $gap="12px">
                    <PadButton>M</PadButton>
                    <PadButton>S</PadButton>
                  </RowButtons>
                </TrackMain>
                <TrackIndex><b>2</b><SmallFolder /></TrackIndex>
              </TrackRow>
              <TrackGap />
            </TrackPanel>
            <ArrangeView />
          </Upper>
          <Lower>
            <Mixer />
            <Dashboard />
            <MarkerManager />
          </Lower>
        </Main>
      </Frame>
    </>
  );
}
